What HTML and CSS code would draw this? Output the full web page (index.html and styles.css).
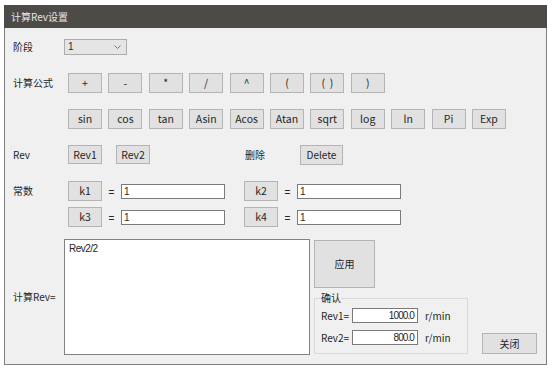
FILE: index.html
```html
<!DOCTYPE html>
<html lang="zh-CN">
<head>
<meta charset="utf-8">
<title>计算Rev设置</title>
<link rel="stylesheet" href="styles.css">
</head>
<body>
<div class="window">
  <div class="titlebar">计算Rev设置</div>
  <div class="content">
    <div class="row row-stage">
      <span class="label">阶段</span>
      <div class="select">
        <span class="select-value">1</span>
        <svg class="chev" width="7" height="4" viewBox="0 0 7 4"><path d="M0.5 0.5 L3.5 3.5 L6.5 0.5" fill="none" stroke="#7a7a7a" stroke-width="1"/></svg>
      </div>
    </div>

    <div class="row row-ops">
      <span class="label">计算公式</span>
      <div class="btns">
        <button class="btn">+</button>
        <button class="btn">-</button>
        <button class="btn">*</button>
        <button class="btn">/</button>
        <button class="btn">^</button>
        <button class="btn">(</button>
        <button class="btn">(&nbsp;&nbsp;)</button>
        <button class="btn">)</button>
      </div>
    </div>

    <div class="row row-funcs">
      <span class="label"></span>
      <div class="btns">
        <button class="btn">sin</button>
        <button class="btn">cos</button>
        <button class="btn">tan</button>
        <button class="btn">Asin</button>
        <button class="btn">Acos</button>
        <button class="btn">Atan</button>
        <button class="btn">sqrt</button>
        <button class="btn">log</button>
        <button class="btn">ln</button>
        <button class="btn">Pi</button>
        <button class="btn">Exp</button>
      </div>
    </div>

    <div class="row row-rev">
      <span class="label">Rev</span>
      <button class="btn btn-rev">Rev1</button>
      <button class="btn btn-rev rev2">Rev2</button>
      <span class="label label-del">删除</span>
      <button class="btn btn-delete">Delete</button>
    </div>

    <div class="row row-k1">
      <span class="label">常数</span>
      <button class="btn">k1</button>
      <span class="eq">=</span>
      <div class="input">1</div>
      <button class="btn k-right">k2</button>
      <span class="eq">=</span>
      <div class="input">1</div>
    </div>

    <div class="row row-k3">
      <span class="label"></span>
      <button class="btn">k3</button>
      <span class="eq">=</span>
      <div class="input">1</div>
      <button class="btn k-right">k4</button>
      <span class="eq">=</span>
      <div class="input">1</div>
    </div>

    <div class="row row-calc">
      <span class="label label-calc">计算Rev=</span>
      <div class="textarea">Rev2/2</div>
      <div class="side">
        <button class="btn btn-apply">应用</button>
        <fieldset class="confirm">
          <legend>确认</legend>
          <div class="crow">
            <span class="clabel">Rev1=</span>
            <div class="num">1000.0</div>
            <span class="unit">r/min</span>
          </div>
          <div class="crow">
            <span class="clabel">Rev2=</span>
            <div class="num">800.0</div>
            <span class="unit">r/min</span>
          </div>
        </fieldset>
      </div>
      <button class="btn btn-close">关闭</button>
    </div>
  </div>
</div>
</body>
</html>
```

FILE: styles.css
```css
* {
  box-sizing: border-box;
}

html,
body {
  margin: 0;
  padding: 0;
  background: #ffffff;
}

body {
  font-family: "Noto Sans CJK SC", "Noto Sans", sans-serif;
  font-size: 10px;
  color: #262626;
}

.window {
  margin: 5px 0 0 4px;
  width: 543px;
  border: 1px solid #7f7f7f;
  border-top: none;
  background: #f0f0f0;
}

.titlebar {
  margin: 0 -1px;
  height: 23px;
  background: #4c4b48;
  color: #e6e6e6;
  font-size: 10px;
  line-height: 23px;
  padding-left: 7px;
}

.content {
  padding: 0 0 9px 8px;
}

.row {
  display: flex;
  align-items: center;
}

.label {
  width: 55px;
  flex: none;
  line-height: 14px;
}

.row-stage {
  margin-top: 11px;
  height: 16px;
}

.row-ops {
  margin-top: 18px;
  height: 20px;
}

.row-funcs {
  margin-top: 16px;
  height: 20px;
}

.row-rev {
  margin-top: 16px;
  height: 19px;
}

.row-k1 {
  margin-top: 17px;
  height: 20px;
}

.row-k3 {
  margin-top: 6px;
  height: 20px;
}

.row-calc {
  margin-top: 12px;
  align-items: stretch;
}

/* select */
.select {
  width: 63px;
  height: 16px;
  margin-left: -4px;
  background: #e5e5e5;
  border: 1px solid #acacac;
  display: flex;
  align-items: center;
  justify-content: space-between;
  padding: 0 5px 0 3px;
}

.select-value {
  font-family: "Liberation Sans", sans-serif;
  font-size: 10px;
  line-height: 14px;
}

.chev {
  display: block;
}

/* buttons */
.btns {
  display: flex;
  gap: 6.4px;
}

.btn {
  flex: none;
  width: 34px;
  height: 20px;
  padding: 0;
  margin: 0;
  background: #e1e1e1;
  border: 1px solid #b4b4b4;
  border-radius: 0;
  font-family: "Noto Sans CJK SC", "Noto Sans", sans-serif;
  font-size: 10.5px;
  line-height: 16px;
  color: #262626;
}

.btn-rev {
  height: 19px;
}

.rev2 {
  margin-left: 14px;
}

.label-del {
  margin-left: 95px;
}

.btn-delete {
  width: 43px;
  height: 20px;
  font-size: 10px;
}

/* constants */
.eq {
  width: 19px;
  flex: none;
  text-align: center;
  font-family: "Liberation Sans", sans-serif;
  font-size: 10px;
  padding-top: 3px;
}

.input {
  width: 104px;
  height: 15px;
  flex: none;
  background: #ffffff;
  border: 1px solid #7a7a7a;
  font-family: "Liberation Sans", sans-serif;
  font-size: 10px;
  line-height: 13px;
  padding-left: 2px;
}

.k-right {
  margin-left: 19px;
}

/* calc area */
.label-calc {
  width: 51px;
  align-self: center;
}

.textarea {
  width: 246px;
  height: 116px;
  flex: none;
  background: #ffffff;
  border: 1px solid #828282;
  font-family: "Liberation Sans", sans-serif;
  font-size: 10px;
  letter-spacing: -0.5px;
  line-height: 13px;
  padding: 2px 4px;
}

.side {
  margin-left: 4px;
  width: 154px;
  flex: none;
  display: flex;
  flex-direction: column;
}

.btn-apply {
  width: 61px;
  height: 48px;
  margin-top: 1px;
  font-size: 10px;
}

.confirm {
  margin: 4px 0 0 0;
  padding: 4px 0 8px 6px;
  border: 1px solid #dadada;
  min-width: 0;
}

.confirm legend {
  padding: 0;
  margin-left: 0;
  font-size: 10px;
  line-height: 12px;
}

.crow {
  display: flex;
  align-items: center;
  height: 15px;
}

.crow + .crow {
  margin-top: 7px;
}

.clabel {
  width: 31px;
  flex: none;
}

.num {
  width: 66px;
  height: 15px;
  flex: none;
  background: #ffffff;
  border: 1px solid #7a7a7a;
  font-family: "Liberation Sans", sans-serif;
  font-size: 10px;
  letter-spacing: -0.9px;
  line-height: 13px;
  text-align: right;
  padding-right: 3px;
}

.unit {
  margin-left: 7px;
}

.btn-close {
  width: 55px;
  height: 21px;
  margin-left: 14px;
  margin-bottom: 1px;
  align-self: flex-end;
  font-size: 10px;
}
```
